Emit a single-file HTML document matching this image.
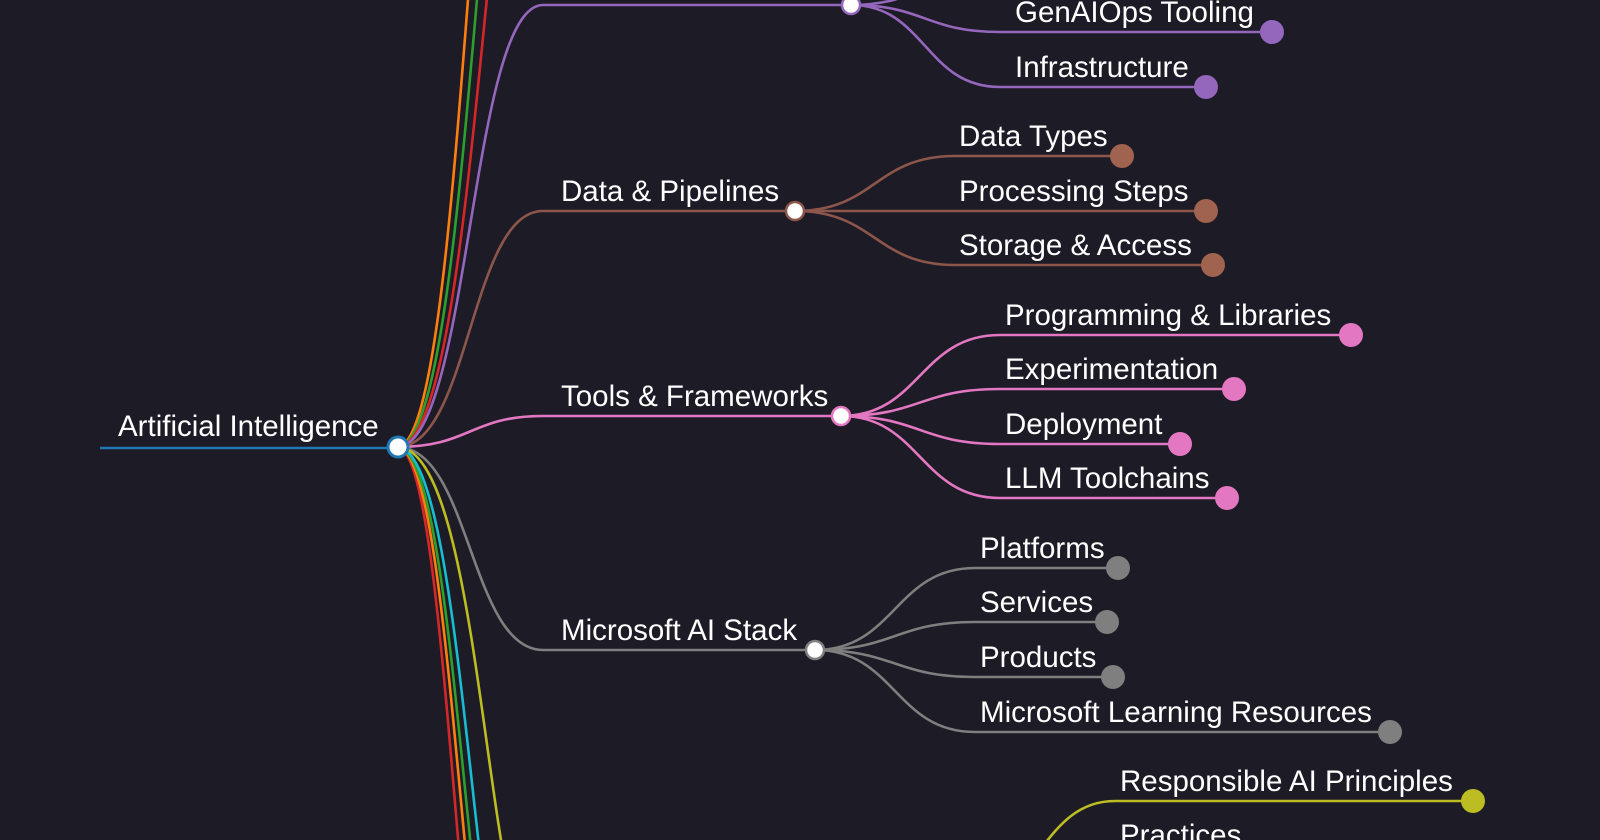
<!DOCTYPE html>
<html><head><meta charset="utf-8"><style>
html,body{margin:0;padding:0;background:#1c1b26;width:1600px;height:840px;overflow:hidden}
svg{display:block}
text{font-family:"Liberation Sans",Arial,sans-serif;font-size:29.5px;fill:#fff}
path{fill:none;stroke-width:2.6}
</style></head><body>
<svg width="1600" height="840" viewBox="0 0 1600 840">
<path d="M397 447 C470 447 470 -500 543 -500" stroke="#ff7f0e"/>
<path d="M397 447 C475 447 478 -400 543 -400" stroke="#2ca02c"/>
<path d="M397 447 C480 447 485 -300 543 -300" stroke="#d62728"/>
<path d="M397 447 C470 447 470 5 543 5 L851 5" stroke="#9467bd"/>
<path d="M397 447 C470 447 470 211 543 211 L795 211" stroke="#8c564b"/>
<path d="M397 447 C470 447 470 416 543 416 L841 416" stroke="#e377c2"/>
<path d="M397 447 C470 447 470 650 543 650 L815 650" stroke="#7f7f7f"/>
<path d="M397 447 C458 447 458 1300 543 1300" stroke="#d62728"/>
<path d="M397 447 C462 447 462 1220 543 1220" stroke="#ff7f0e"/>
<path d="M397 447 C466 447 466 1170 543 1170" stroke="#2ca02c"/>
<path d="M397 447 C472 447 472 1110 543 1110" stroke="#17becf"/>
<path d="M397 447 C485 447 485 960 543 960" stroke="#bcbd22"/>
<path d="M100 448 L397 448" stroke="#1f77b4" stroke-width="4"/>
<text x="118" y="436">Artificial Intelligence</text>
<circle cx="398" cy="447" r="10" fill="#fff" stroke="#1f77b4" stroke-width="3"/>

<path d="M851 5 C925 5 925 -30 1000 -30 L1250 -30" stroke="#9467bd"/>
<path d="M851 5 C925 5 925 32 1000 32 L1272 32" stroke="#9467bd"/>
<path d="M851 5 C925 5 925 87 1000 87 L1206 87" stroke="#9467bd"/>
<text x="1015" y="22">GenAIOps Tooling</text>
<text x="1015" y="77">Infrastructure</text>
<circle cx="1272" cy="32" r="12" fill="#9467bd"/>
<circle cx="1206" cy="87" r="12" fill="#9467bd"/>
<circle cx="851" cy="5" r="9" fill="#fff" stroke="#9467bd" stroke-width="2.5"/>

<path d="M795 211 C875 211 875 156 955 156 L1122 156" stroke="#8c564b"/>
<path d="M795 211 L1206 211" stroke="#8c564b"/>
<path d="M795 211 C875 211 875 265 955 265 L1213 265" stroke="#8c564b"/>
<text x="561" y="201">Data &amp; Pipelines</text>
<text x="959" y="146">Data Types</text>
<text x="959" y="201">Processing Steps</text>
<text x="959" y="255">Storage &amp; Access</text>
<circle cx="1122" cy="156" r="12" fill="#a0634f"/>
<circle cx="1206" cy="211" r="12" fill="#a0634f"/>
<circle cx="1213" cy="265" r="12" fill="#a0634f"/>
<circle cx="795" cy="211" r="9" fill="#fff" stroke="#8c564b" stroke-width="2.5"/>

<path d="M841 416 C920 416 920 335 1000 335 L1351 335" stroke="#e377c2"/>
<path d="M841 416 C920 416 920 389 1000 389 L1234 389" stroke="#e377c2"/>
<path d="M841 416 C920 416 920 444 1000 444 L1180 444" stroke="#e377c2"/>
<path d="M841 416 C920 416 920 498 1000 498 L1227 498" stroke="#e377c2"/>
<text x="561" y="406">Tools &amp; Frameworks</text>
<text x="1005" y="325">Programming &amp; Libraries</text>
<text x="1005" y="379">Experimentation</text>
<text x="1005" y="434">Deployment</text>
<text x="1005" y="488">LLM Toolchains</text>
<circle cx="1351" cy="335" r="12" fill="#e377c2"/>
<circle cx="1234" cy="389" r="12" fill="#e377c2"/>
<circle cx="1180" cy="444" r="12" fill="#e377c2"/>
<circle cx="1227" cy="498" r="12" fill="#e377c2"/>
<circle cx="841" cy="416" r="9" fill="#fff" stroke="#e377c2" stroke-width="2.5"/>

<path d="M815 650 C895 650 895 568 975 568 L1118 568" stroke="#7f7f7f"/>
<path d="M815 650 C895 650 895 622 975 622 L1107 622" stroke="#7f7f7f"/>
<path d="M815 650 C895 650 895 677 975 677 L1113 677" stroke="#7f7f7f"/>
<path d="M815 650 C895 650 895 732 975 732 L1390 732" stroke="#7f7f7f"/>
<text x="561" y="640">Microsoft AI Stack</text>
<text x="980" y="558">Platforms</text>
<text x="980" y="612">Services</text>
<text x="980" y="667">Products</text>
<text x="980" y="722">Microsoft Learning Resources</text>
<circle cx="1118" cy="568" r="12" fill="#7f7f7f"/>
<circle cx="1107" cy="622" r="12" fill="#7f7f7f"/>
<circle cx="1113" cy="677" r="12" fill="#7f7f7f"/>
<circle cx="1390" cy="732" r="12" fill="#7f7f7f"/>
<circle cx="815" cy="650" r="9" fill="#fff" stroke="#7f7f7f" stroke-width="2.5"/>

<path d="M960 900 C1040 900 1040 801 1115 801 L1473 801" stroke="#bcbd22"/>
<path d="M960 900 C1040 900 1040 855 1115 855 L1300 855" stroke="#bcbd22"/>
<text x="1120" y="791">Responsible AI Principles</text>
<text x="1120" y="845">Practices</text>
<circle cx="1473" cy="801" r="12" fill="#bcbd22"/>
</svg>
</body></html>
